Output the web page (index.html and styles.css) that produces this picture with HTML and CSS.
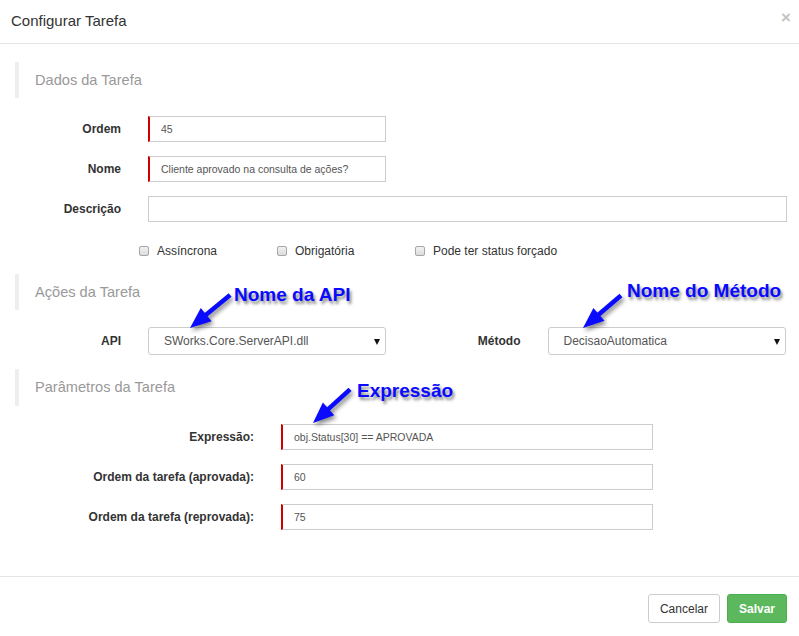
FILE: index.html
```html
<!DOCTYPE html>
<html lang="pt">
<head>
<meta charset="utf-8">
<title>Configurar Tarefa</title>
<link rel="stylesheet" href="styles.css">
</head>
<body>
<div class="modal">
  <div class="modal-header">
    <h4 class="modal-title">Configurar Tarefa</h4>
    <span class="close">×</span>
  </div>

  <div class="modal-body">
    <div class="section-title">Dados da Tarefa</div>

    <div class="form-row first">
      <label class="lbl lbl-std">Ordem</label>
      <div class="input req w-short">45</div>
    </div>
    <div class="form-row">
      <label class="lbl lbl-std">Nome</label>
      <div class="input req w-short">Cliente aprovado na consulta de ações?</div>
    </div>
    <div class="form-row">
      <label class="lbl lbl-std">Descrição</label>
      <div class="input grow"></div>
    </div>

    <div class="check-row">
      <div class="check"><span class="box"></span><span>Assíncrona</span></div>
      <div class="check"><span class="box"></span><span>Obrigatória</span></div>
      <div class="check"><span class="box"></span><span>Pode ter status forçado</span></div>
    </div>

    <div class="section-title sec2">Ações da Tarefa</div>

    <div class="form-row first split">
      <div class="half">
        <label class="lbl lbl-std">API</label>
        <div class="select w-short"><span class="sel-text">SWorks.Core.ServerAPI.dll</span><span class="caret"></span></div>
      </div>
      <div class="half">
        <label class="lbl lbl-std">Método</label>
        <div class="select w-short"><span class="sel-text">DecisaoAutomatica</span><span class="caret"></span></div>
      </div>
    </div>

    <div class="section-title sec3">Parâmetros da Tarefa</div>

    <div class="form-row first">
      <label class="lbl lbl-wide">Expressão:</label>
      <div class="input req w-long">obj.Status[30] == APROVADA</div>
    </div>
    <div class="form-row">
      <label class="lbl lbl-wide">Ordem da tarefa (aprovada):</label>
      <div class="input req w-long">60</div>
    </div>
    <div class="form-row">
      <label class="lbl lbl-wide">Ordem da tarefa (reprovada):</label>
      <div class="input req w-long">75</div>
    </div>
  </div>

  <div class="modal-footer">
    <button class="btn btn-default">Cancelar</button>
    <button class="btn btn-success">Salvar</button>
  </div>

  <svg class="arrows" width="799" height="636" viewBox="0 0 799 636">
    <g class="arrow" transform="translate(190 328) rotate(140.5)">
      <line x1="-18" y1="0" x2="-52" y2="0"/>
      <polygon points="0,0 -21,-8.5 -21,8.5"/>
    </g>
    <g class="arrow" transform="translate(583 328) rotate(139.4)">
      <line x1="-18" y1="0" x2="-50" y2="0"/>
      <polygon points="0,0 -21,-8.5 -21,8.5"/>
    </g>
    <g class="arrow" transform="translate(313 423) rotate(137.8)">
      <line x1="-18" y1="0" x2="-50" y2="0"/>
      <polygon points="0,0 -21,-8.5 -21,8.5"/>
    </g>
  </svg>
  <div class="note note-api">Nome da API</div>
  <div class="note note-metodo">Nome do Método</div>
  <div class="note note-expr">Expressão</div>
</div>
</body>
</html>
```

FILE: styles.css
```css
* { box-sizing: border-box; }

html, body {
  margin: 0;
  padding: 0;
  background: #fff;
}

body {
  font-family: "Liberation Sans", Arial, sans-serif;
  font-size: 12px;
  color: #333;
}

.modal {
  position: relative;
  width: 799px;
  height: 636px;
  background: #fff;
}

.modal-header {
  height: 44px;
  border-bottom: 1px solid #e5e5e5;
  display: flex;
  align-items: center;
  justify-content: space-between;
  padding: 0 8px 2px 11px;
}

.modal-title {
  margin: 0;
  font-size: 15px;
  font-weight: normal;
  color: #333;
}

.close {
  font-size: 17px;
  font-weight: bold;
  color: #c3c3c3;
  line-height: 1;
  margin-top: -6px;
}

.modal-body {
  height: 533px;
  padding-top: 18px;
  border-bottom: 1px solid #e5e5e5;
}

.section-title {
  margin-left: 15px;
  height: 36px;
  line-height: 36px;
  border-left: 4px solid #eee;
  padding-left: 16px;
  font-size: 14.6px;
  color: #999;
}

.sec2 { margin-top: 13px; }
.sec3 { margin-top: 14px; height: 37px; }

.form-row {
  display: flex;
  align-items: center;
  margin-top: 14px;
  padding-right: 12px;
}

.form-row.first { margin-top: 18px; }
.form-row.split { margin-top: 17px; padding-right: 0; }

.half {
  width: 400px;
  display: flex;
  align-items: center;
}

.lbl {
  flex: none;
  text-align: right;
  font-weight: bold;
  color: #333;
  margin-right: 27px;
}

.lbl-std { width: 121px; }
.lbl-wide { width: 254px; }

.input {
  height: 26px;
  border: 1px solid #ccc;
  padding: 0 10px 0 11px;
  display: flex;
  align-items: center;
  font-size: 10.5px;
  color: #555;
  background: #fff;
  white-space: nowrap;
}

.input.req {
  border-left: 2px solid #d00000;
}

.w-short { width: 238px; }
.w-long { width: 372px; }
.grow { flex: 1; }

.select {
  height: 28px;
  border: 1px solid #ccc;
  border-radius: 3px;
  padding: 0 5px 0 15px;
  display: flex;
  align-items: center;
  justify-content: space-between;
  color: #555;
  font-size: 12px;
  background: #fff;
}

.caret {
  width: 0;
  height: 0;
  border-left: 3.5px solid transparent;
  border-right: 3.5px solid transparent;
  border-top: 6px solid #111;
  margin-top: 1px;
}

.check-row {
  display: flex;
  align-items: center;
  height: 20px;
  margin-top: 19px;
  padding-left: 139px;
}

.check {
  width: 138px;
  display: flex;
  align-items: center;
  color: #333;
  white-space: nowrap;
}

.box {
  width: 10px;
  height: 10px;
  border: 1px solid #a6a6a6;
  border-radius: 2px;
  background: linear-gradient(#f2f2f2, #dcdcdc);
  margin-right: 8px;
  flex: none;
}

.modal-footer {
  display: flex;
  justify-content: flex-end;
  gap: 7px;
  padding: 17px 12px 0 0;
}

.btn {
  height: 29px;
  padding: 0 11px;
  font-family: "Liberation Sans", Arial, sans-serif;
  font-size: 12px;
  border-radius: 3px;
  border: 1px solid #ccc;
  background: #fff;
  color: #333;
}

.btn-success {
  background: #5cb85c;
  border-color: #4cae4c;
  color: #fff;
  font-weight: bold;
}

.arrows {
  position: absolute;
  top: 0;
  left: 0;
  pointer-events: none;
  filter: drop-shadow(2px 3px 2px rgba(0, 0, 0, 0.45));
}

.arrow line {
  stroke: #0a0aff;
  stroke-width: 4.5;
}

.arrow polygon {
  fill: #0a0aff;
}

.note {
  position: absolute;
  font-size: 19px;
  line-height: 19px;
  font-weight: bold;
  color: #0a0aff;
  white-space: nowrap;
  text-shadow: 2px 3px 3px rgba(0, 0, 0, 0.45);
}

.note-api { left: 234px; top: 285px; }
.note-metodo { left: 627px; top: 281px; }
.note-expr { left: 357px; top: 381px; }
```
